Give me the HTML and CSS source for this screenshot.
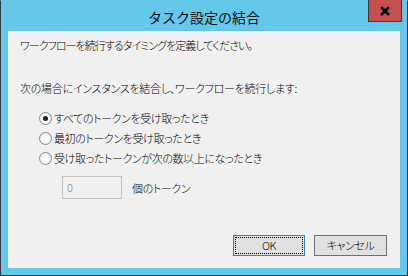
FILE: index.html
```html
<!DOCTYPE html>
<html lang="ja">
<head>
<meta charset="utf-8">
<link rel="stylesheet" href="styles.css">
</head>
<body>
<div class="window">
  <div class="titlebar">
    <span class="title">タスク設定の結合</span>
    <span class="close" aria-label="閉じる">
      <svg width="12" height="10" viewBox="0 0 12 10"><path d="M2 1 L10 9 M10 1 L2 9" stroke="#000" stroke-width="2.6" fill="none"/></svg>
    </span>
  </div>
  <div class="client">
    <p class="line first">ワークフローを続行するタイミングを定義してください。</p>
    <p class="line second">次の場合にインスタンスを結合し、ワークフローを続行します:</p>
    <div class="options">
      <label class="option"><span class="radio checked"></span><span>すべてのトークンを受け取ったとき</span></label>
      <label class="option"><span class="radio"></span><span>最初のトークンを受け取ったとき</span></label>
      <label class="option"><span class="radio"></span><span>受け取ったトークンが次の数以上になったとき</span></label>
    </div>
    <div class="countrow">
      <span class="input">0</span>
      <span class="unit">個のトークン</span>
    </div>
    <div class="buttons">
      <span class="btn ok"><span class="focus">OK</span></span>
      <span class="btn">キャンセル</span>
    </div>
  </div>
</div>
</body>
</html>
```
FILE: styles.css
```css
* { box-sizing: border-box; }
html, body { margin: 0; padding: 0; }
body {
  width: 408px;
  height: 276px;
  overflow: hidden;
  font-family: "Noto Sans CJK JP", "Noto Sans", sans-serif;
  font-size: 12px;
  color: #000;
}
.window {
  position: relative;
  width: 408px;
  height: 276px;
  background: #63c8e9;
  border: 1px solid #2f3a40;
  border-top-color: #63c8e9;
  display: flex;
  flex-direction: column;
}
.titlebar {
  height: 30px;
  display: flex;
  align-items: center;
  justify-content: center;
}
.title {
  font-size: 14px;
  line-height: 20px;
  color: #111;
  margin-top: 1px;
}
.close {
  position: absolute;
  left: 367px;
  top: -1px;
  width: 34px;
  height: 22px;
  background: #c75050;
  border: 1px solid #51312f;
  border-top: none;
  display: flex;
  align-items: center;
  justify-content: center;
}
.client {
  flex: 1;
  margin: 0 7px 7px 7px;
  background: #f0f0f0;
  padding: 4px 0 12px 12px;
  display: flex;
  flex-direction: column;
  font-size: 11px;
  letter-spacing: -0.4px;
  font-weight: 300;
  font-feature-settings: "palt";
}
.line {
  margin: 0;
  line-height: 20px;
  height: 20px;
  white-space: nowrap;
}
.first { letter-spacing: -0.95px; }
.second {
  margin-top: 23px;
  letter-spacing: -0.27px;
}
.options {
  margin-top: 10px;
  padding-left: 19px;
  display: flex;
  flex-direction: column;
}
.option {
  height: 20px;
  line-height: 20px;
  display: flex;
  align-items: center;
  gap: 2px;
  white-space: nowrap;
}
.radio {
  width: 13px;
  height: 13px;
  border-radius: 50%;
  border: 1px solid #8a8a8a;
  background: radial-gradient(circle, #ffffff 0%, #f4f4f4 60%, #e6e6e6 100%);
  display: flex;
  align-items: center;
  justify-content: center;
  flex: none;
}
.radio.checked::after {
  content: "";
  width: 5px;
  height: 5px;
  border-radius: 50%;
  background: #222;
}
.countrow {
  margin-top: 8px;
  padding-left: 42px;
  display: flex;
  align-items: center;
  gap: 10px;
}
.input {
  width: 60px;
  height: 23px;
  border: 1px solid #c3c3c3;
  background: #f0f0f0;
  color: #7a7a7a;
  padding-left: 4px;
  line-height: 21px;
}
.unit { line-height: 20px; }
.buttons {
  margin-top: auto;
  display: flex;
  justify-content: flex-end;
  gap: 9px;
  padding-right: 13px;
}
.btn {
  width: 73px;
  height: 21px;
  border: 1px solid #707070;
  background: #e1e1e1;
  display: flex;
  align-items: center;
  justify-content: center;
  line-height: 17px;
}
.btn.ok {
  width: 72px;
  border-color: #3c7fb1;
  padding: 1px;
}
.focus {
  width: 100%;
  height: 100%;
  border: 1px dotted #000;
  display: flex;
  align-items: center;
  justify-content: center;
}
```
